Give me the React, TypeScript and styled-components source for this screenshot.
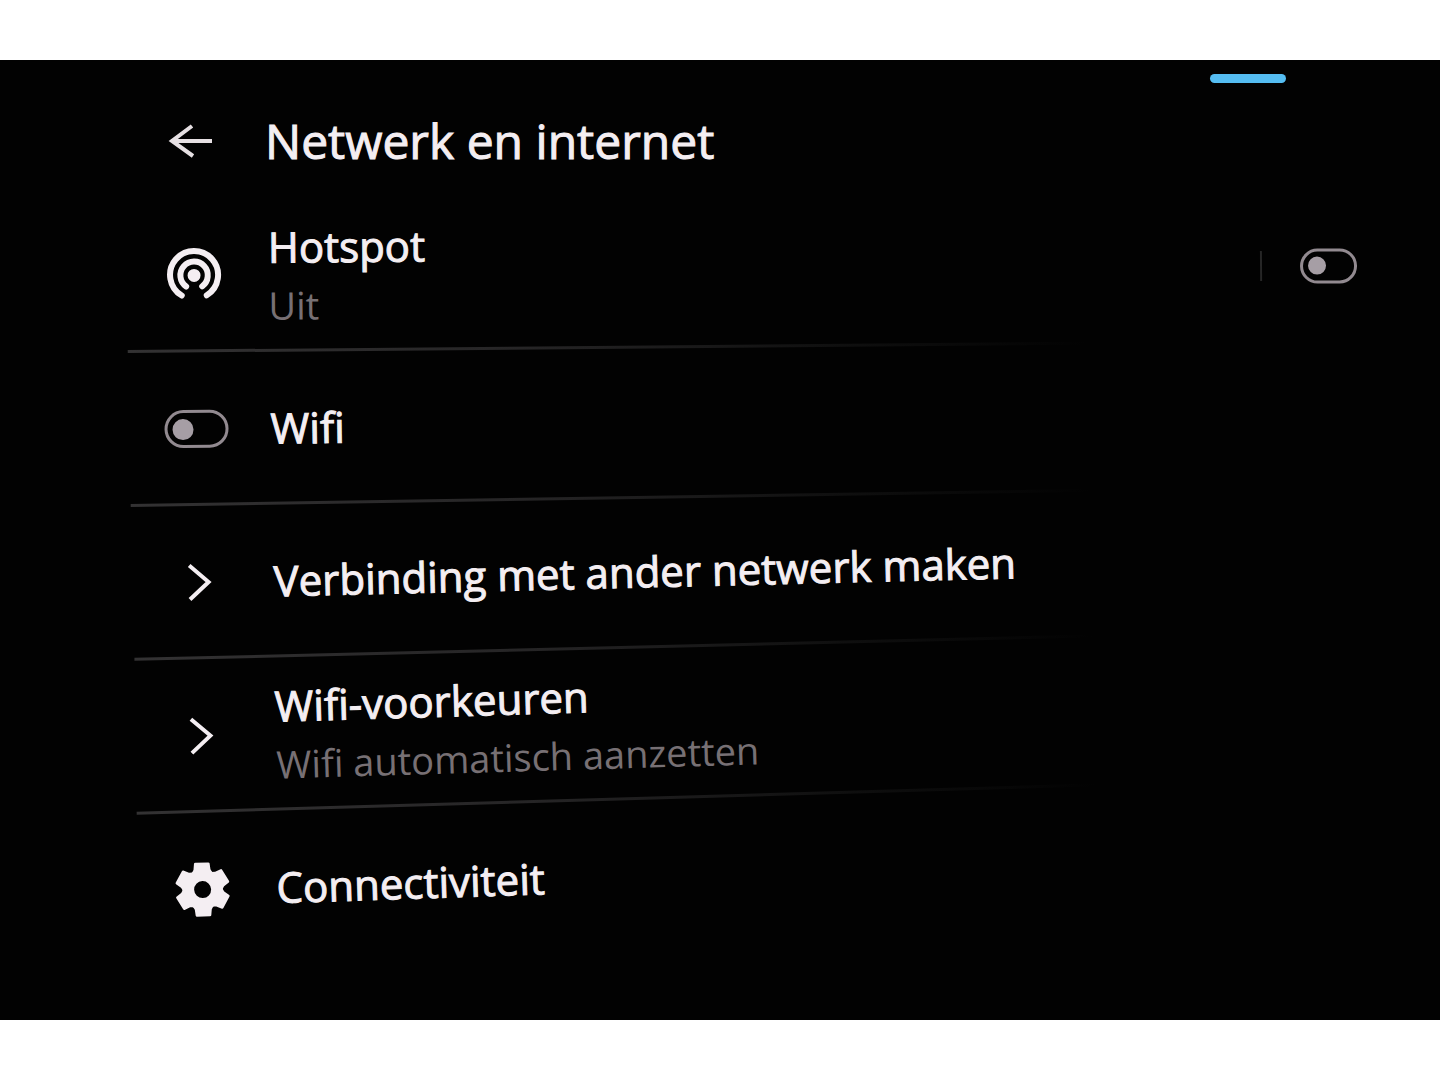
import React from 'react';
import styled, { createGlobalStyle } from 'styled-components';

const Global = createGlobalStyle`
  *, *::before, *::after { box-sizing: border-box; }
  body {
    margin: 0;
    background: #fff;
    color: #f4eef2;
    font-family: 'Open Sans', 'Noto Sans', sans-serif;
  }
  button {
    margin: 0;
    padding: 0;
    border: 0;
    background: none;
    color: inherit;
    font: inherit;
    text-align: left;
    cursor: pointer;
  }
`;

const Page = styled.div`
  display: flex;
  min-height: 100vh;
  padding: 60px 0;
`;

const Screen = styled.main`
  flex: 1;
  min-width: 0;
  padding: 0 86px 0 124px;
  overflow: hidden;
  background: #020202;
`;

const StatusBar = styled.div`
  display: flex;
  justify-content: flex-end;
  padding: 14px 68px 0 0;
`;

const Indicator = styled.span`
  width: 76px;
  height: 9px;
  border-radius: 5px;
  background: #55bdf2;
`;

const Header = styled.header`
  display: flex;
  align-items: center;
  height: 116px;
`;

const IconCell = styled.span`
  display: flex;
  flex: none;
  justify-content: center;
  width: 133px;

  svg { display: block; }
`;

const BackButton = styled.button`
  display: flex;
`;

const PageTitle = styled.h1`
  margin: 0;
  padding-left: 8px;
  font-size: 48px;
  font-weight: 400;
  line-height: 60px;
  -webkit-text-stroke: 1px currentColor;
`;

const List = styled.ul`
  margin: 0;
  padding: 0;
  list-style: none;
`;

/* The display is seen at an angle, so lower rows lean further. */
const Row = styled.li<{ $tilt: number; $last?: boolean }>`
  display: flex;
  align-items: center;
  height: 154px;
  transform: rotate(-${(p) => p.$tilt}deg);
  transform-origin: left -275px;
  background: ${(p) =>
    p.$last
      ? 'none'
      : 'linear-gradient(90deg, #333233 0%, #262526 32%, #0f0f0f 58%, transparent 78%) left bottom / 100% 3px no-repeat'};
`;

const RowButton = styled.button`
  display: flex;
  flex: 1;
  align-items: center;
  height: 100%;
`;

const RowLabel = styled.label`
  flex: 1;
  padding-left: 8px;
`;

const Copy = styled.span`
  display: flex;
  flex-direction: column;
  padding-left: 8px;
`;

const Title = styled.span`
  font-size: 42px;
  line-height: 60px;
  white-space: nowrap;
  -webkit-text-stroke: 1px currentColor;
`;

const Subtitle = styled.span`
  color: #777074;
  font-size: 38px;
  line-height: 56px;
  white-space: nowrap;
`;

const Separator = styled.span`
  width: 2px;
  height: 30px;
  margin-right: 38px;
  background: #262626;
`;

const Toggle = styled.input<{ $large?: boolean }>`
  display: flex;
  align-items: center;
  flex: none;
  width: ${(p) => (p.$large ? 64 : 57)}px;
  height: ${(p) => (p.$large ? 38 : 35)}px;
  margin: 0;
  padding-left: 5px;
  border: 3px solid #928a90;
  border-radius: 19px;
  appearance: none;
  cursor: pointer;

  &::before {
    content: '';
    width: ${(p) => (p.$large ? 21 : 18)}px;
    height: ${(p) => (p.$large ? 21 : 18)}px;
    border-radius: 50%;
    background: #a69ea5;
  }

  &:checked { justify-content: flex-end; padding: 0 5px 0 0; }
`;

const BackIcon = () => (
  <svg width="46" height="36" viewBox="0 0 46 36" fill="none" stroke="#e6e0e3" strokeWidth="4" aria-hidden="true">
    <path d="M44 18H4M24 3L4 18L25 33" />
  </svg>
);

const ChevronIcon = () => (
  <svg width="26" height="40" viewBox="0 0 26 40" fill="none" stroke="currentColor" strokeWidth="4" aria-hidden="true">
    <path d="M3 3L22 20L3 37" />
  </svg>
);

const HotspotIcon = () => (
  <svg width="56" height="56" viewBox="-28 -28 56 56" fill="none" stroke="currentColor" strokeWidth="6" strokeLinecap="round" aria-hidden="true">
    <path d="M-12.5 20A24 24 0 1 1 12.5 20" />
    <path d="M-8 11A13.7 13.7 0 1 1 8 11" />
    <circle r="6.5" fill="currentColor" stroke="none" />
  </svg>
);

const GearIcon = () => (
  <svg width="56" height="56" viewBox="-28 -28 56 56" fill="currentColor" aria-hidden="true">
    <circle r="14.25" fill="none" stroke="currentColor" strokeWidth="11.5" />
    {[0, 60, 120, 180, 240, 300].map((angle) => (
      <path
        key={angle}
        transform={`rotate(${angle})`}
        d="M-10.5 -16.5L-8.5 -20L-7.8 -26Q-7.6 -27 -6.5 -27H6.5Q7.6 -27 7.8 -26L8.5 -20L10.5 -16.5Z"
      />
    ))}
  </svg>
);

type LinkRowProps = {
  tilt: number;
  icon: React.ReactNode;
  title: string;
  subtitle?: string;
  last?: boolean;
};

const LinkRow = ({ tilt, icon, title, subtitle, last }: LinkRowProps) => (
  <Row $tilt={tilt} $last={last}>
    <RowButton type="button">
      <IconCell>{icon}</IconCell>
      <Copy>
        <Title>{title}</Title>
        {subtitle && <Subtitle>{subtitle}</Subtitle>}
      </Copy>
    </RowButton>
  </Row>
);

export default function App() {
  return (
    <Page>
      <Global />
      <Screen>
        <StatusBar>
          <Indicator />
        </StatusBar>
        <Header>
          <IconCell>
            <BackButton type="button" aria-label="Terug">
              <BackIcon />
            </BackButton>
          </IconCell>
          <PageTitle>Netwerk en internet</PageTitle>
        </Header>
        <List>
          <Row $tilt={0.5}>
            <RowButton type="button">
              <IconCell>
                <HotspotIcon />
              </IconCell>
              <Copy>
                <Title>Hotspot</Title>
                <Subtitle>Uit</Subtitle>
              </Copy>
            </RowButton>
            <Separator />
            <Toggle type="checkbox" role="switch" aria-label="Hotspot" />
          </Row>
          <Row $tilt={0.9}>
            <IconCell>
              <Toggle $large type="checkbox" role="switch" id="wifi" />
            </IconCell>
            <RowLabel htmlFor="wifi">
              <Title>Wifi</Title>
            </RowLabel>
          </Row>
          <LinkRow tilt={1.4} icon={<ChevronIcon />} title="Verbinding met ander netwerk maken" />
          <LinkRow tilt={1.7} icon={<ChevronIcon />} title="Wifi-voorkeuren" subtitle="Wifi automatisch aanzetten" />
          <LinkRow tilt={1.9} icon={<GearIcon />} title="Connectiviteit" last />
        </List>
      </Screen>
    </Page>
  );
}
